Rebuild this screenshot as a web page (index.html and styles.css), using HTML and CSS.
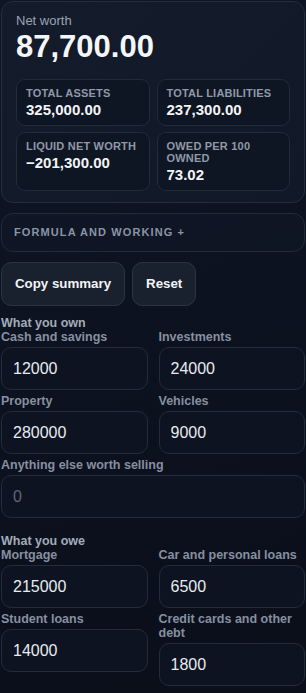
FILE: index.html
```html
<!DOCTYPE html>
<html lang="en">
<head>
    <meta charset="UTF-8">
    <meta name="viewport" content="width=device-width, initial-scale=1.0">
    <title>Net worth calculator</title>
    <link rel="stylesheet" href="styles.css">
</head>
<body>
    <div class="app">
        <div class="summary-card">
            <div class="summary-label">Net worth</div>
            <div class="summary-value">87,700.00</div>
            <div class="stats">
                <div class="stat">
                    <div class="stat-label">Total assets</div>
                    <div class="stat-value">325,000.00</div>
                </div>
                <div class="stat">
                    <div class="stat-label">Total liabilities</div>
                    <div class="stat-value">237,300.00</div>
                </div>
                <div class="stat">
                    <div class="stat-label">Liquid net worth</div>
                    <div class="stat-value">−201,300.00</div>
                </div>
                <div class="stat">
                    <div class="stat-label">Owed per 100 owned</div>
                    <div class="stat-value">73.02</div>
                </div>
            </div>
        </div>

        <details class="formula">
            <summary>Formula and working +</summary>
        </details>

        <div class="actions">
            <button class="btn">Copy summary</button>
            <button class="btn">Reset</button>
        </div>

        <div class="group">
            <div class="group-title">What you own</div>
            <div class="fields">
                <label class="field">
                    <span>Cash and savings</span>
                    <input type="text" value="12000">
                </label>
                <label class="field">
                    <span>Investments</span>
                    <input type="text" value="24000">
                </label>
                <label class="field">
                    <span>Property</span>
                    <input type="text" value="280000">
                </label>
                <label class="field">
                    <span>Vehicles</span>
                    <input type="text" value="9000">
                </label>
                <label class="field wide">
                    <span>Anything else worth selling</span>
                    <input type="text" placeholder="0">
                </label>
            </div>
        </div>

        <div class="group">
            <div class="group-title">What you owe</div>
            <div class="fields">
                <label class="field">
                    <span>Mortgage</span>
                    <input type="text" value="215000">
                </label>
                <label class="field">
                    <span>Car and personal loans</span>
                    <input type="text" value="6500">
                </label>
                <label class="field">
                    <span>Student loans</span>
                    <input type="text" value="14000">
                </label>
                <label class="field">
                    <span>Credit cards and other debt</span>
                    <input type="text" value="1800">
                </label>
            </div>
        </div>
    </div>
</body>
</html>
```

FILE: styles.css
```css
* { margin: 0; padding: 0; box-sizing: border-box; }

body {
    font-family: "Liberation Sans", Arial, sans-serif;
    background: linear-gradient(160deg, #0f1626 0%, #0b111d 60%, #0a0f1a 100%);
    color: #e6e9ef;
    min-height: 100vh;
}

.app {
    display: flex;
    flex-direction: column;
    gap: 10px;
    padding: 1px 1px 12px 1px;
}

.summary-card {
    background: linear-gradient(135deg, #141c2c 0%, #111827 100%);
    border: 1px solid #242d3d;
    border-radius: 12px;
    padding: 11px 14px;
}

.summary-label {
    font-size: 13px;
    line-height: 16px;
    color: #9aa3b2;
}

.summary-value {
    font-size: 31px;
    line-height: 34px;
    font-weight: 700;
    color: #f5f6f8;
    margin-top: 1px;
}

.stats {
    display: grid;
    grid-template-columns: 1fr 1fr;
    gap: 6px 7px;
    margin-top: 15px;
}

.stat {
    background: #0e1523;
    border: 1px solid #222b3a;
    border-radius: 9px;
    padding: 7px 9px 6px;
}

.stat-label {
    font-size: 11px;
    line-height: 12px;
    font-weight: 700;
    letter-spacing: 0.2px;
    text-transform: uppercase;
    color: #9099a8;
}

.stat-value {
    font-size: 15px;
    line-height: 18px;
    font-weight: 700;
    color: #f3f4f6;
    margin-top: 2px;
}

.formula {
    border: 1px solid #222b3a;
    border-radius: 12px;
    background: rgba(17, 24, 38, 0.6);
}

.formula summary {
    list-style: none;
    padding: 12px;
    font-size: 11px;
    line-height: 13px;
    font-weight: 700;
    letter-spacing: 0.1em;
    text-transform: uppercase;
    color: #8b94a5;
    cursor: pointer;
}

.formula summary::-webkit-details-marker { display: none; }

.actions {
    display: flex;
    gap: 7px;
}

.btn {
    font-family: inherit;
    font-size: 13.3px;
    line-height: 16px;
    font-weight: 700;
    color: #f3f4f6;
    background: #1a212e;
    border: 1px solid #2b3444;
    border-radius: 10px;
    padding: 13px 13px;
    cursor: pointer;
}

.group + .group {
    margin-top: 6px;
}

.group-title {
    font-size: 12.5px;
    line-height: 14px;
    font-weight: 700;
    color: #a3abb9;
}

.fields {
    display: grid;
    grid-template-columns: 1fr 1fr;
    gap: 4px 11px;
    align-items: start;
}

.field {
    display: flex;
    flex-direction: column;
    gap: 3px;
}

.field span {
    font-size: 12.5px;
    line-height: 14px;
    font-weight: 700;
    color: #878fa0;
}

.field.wide {
    grid-column: 1 / -1;
}

.field input {
    font-family: inherit;
    font-size: 16px;
    line-height: 19px;
    color: #e8ebf0;
    background: #0d1321;
    border: 1px solid #232c3b;
    border-radius: 10px;
    padding: 11px 11px;
    width: 100%;
    outline: none;
}

.field input::placeholder {
    color: #5f6778;
}
```
